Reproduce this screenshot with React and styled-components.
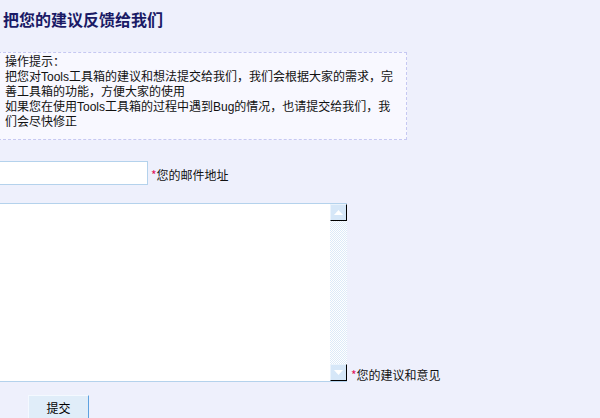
import styled, { createGlobalStyle } from "styled-components";

const GlobalStyle = createGlobalStyle`
  html, body {
    margin: 0;
    padding: 0;
    background: #eef0fc;
    overflow: hidden;
  }
  body {
    font-family: "DejaVu Sans", "Noto Sans CJK SC", sans-serif;
    font-size: 12px;
    color: #000;
  }
`;

const Page = styled.div`
  width: 600px;
  height: 418px;
  overflow: hidden;
`;

const Title = styled.h2`
  margin: 9px 0 0 3px;
  font-family: "Noto Sans CJK SC", sans-serif;
  font-size: 16px;
  line-height: 20px;
  font-weight: bold;
  color: #1a1a66;
`;

const HintBox = styled.div`
  margin: 23px 0 0 -2px;
  width: 393px;
  padding: 2px 8px 9px 6px;
  border: 1px dashed #c6c8f2;
  background: #f8f8ff;
  font-family: "Liberation Sans", "Noto Sans CJK SC", sans-serif;
  font-size: 12px;
  line-height: 15px;
  color: #111;
`;

const Form = styled.div`
  margin: 21px 0 0 -80px;
  display: flex;
  flex-direction: column;
`;

const Row = styled.div`
  display: flex;
  align-items: ${(p) => (p.bottom ? "flex-end" : "center")};
  margin-bottom: ${(p) => p.gap || 0}px;
`;

const TextInput = styled.input`
  box-sizing: border-box;
  width: 228px;
  height: 24px;
  margin: 0;
  border: 1px solid #b4d2ec;
  background: #fff;
  outline: none;
`;

const Label = styled.span`
  margin-left: ${(p) => p.offset || 3}px;
  font-family: "Noto Sans CJK SC", sans-serif;
  font-size: 12px;
  line-height: 15px;
  color: #111;
  padding-top: 2px;
`;

const Star = styled.span`
  color: #e0105a;
`;

const AreaBox = styled.div`
  display: flex;
  width: 427px;
  height: 177px;
  border-top: 1px solid #b4d2ec;
  border-bottom: 1px solid #b4d2ec;
  background: #fff;
`;

const TextArea = styled.textarea`
  flex: 1;
  border: none;
  margin: 0;
  padding: 0;
  resize: none;
  outline: none;
  background: #fff;
`;

const Scrollbar = styled.div`
  width: 17px;
  display: flex;
  flex-direction: column;
  background-color: #dceaf8;
  background-image:
    linear-gradient(45deg, #fff 25%, transparent 25%, transparent 75%, #fff 75%),
    linear-gradient(45deg, #fff 25%, transparent 25%, transparent 75%, #fff 75%);
  background-size: 2px 2px;
  background-position: 0 0, 1px 1px;
`;

const ScrollButton = styled.div`
  box-sizing: border-box;
  width: 17px;
  height: 17px;
  display: flex;
  align-items: center;
  justify-content: center;
  background: #d6e7f8;
  border-top: 1px solid #eaf3fc;
  border-left: 1px solid #eaf3fc;
  border-right: 1px solid #000;
  border-bottom: 1px solid #000;
`;

const Track = styled.div`
  flex: 1;
`;

const Arrow = ({ down }) => (
  <svg width="9" height="5" viewBox="0 0 9 5">
    <path d={down ? "M0 0 H9 L4.5 5 Z" : "M0 5 H9 L4.5 0 Z"} fill="#fff" />
  </svg>
);

const SubmitButton = styled.button`
  box-sizing: border-box;
  margin-left: 108px;
  width: 61px;
  height: 24px;
  padding: 0;
  background: #e0edf9;
  border: 1px solid #f4f9ff;
  border-right-color: #5ea2e0;
  border-bottom-color: #5ea2e0;
  font-family: "Noto Sans CJK SC", sans-serif;
  font-size: 12px;
  color: #000;
`;

export default function App() {
  return (
    <Page>
      <GlobalStyle />
      <Title>把您的建议反馈给我们</Title>
      <HintBox>
        操作提示：
        <br />
        把您对Tools工具箱的建议和想法提交给我们，我们会根据大家的需求，完善工具箱的功能，方便大家的使用
        <br />
        如果您在使用Tools工具箱的过程中遇到Bug的情况，也请提交给我们，我们会尽快修正
      </HintBox>
      <Form>
        <Row gap={18}>
          <TextInput type="text" />
          <Label>
            <Star>*</Star>您的邮件地址
          </Label>
        </Row>
        <Row bottom gap={13}>
          <AreaBox>
            <TextArea />
            <Scrollbar>
              <ScrollButton>
                <Arrow />
              </ScrollButton>
              <Track />
              <ScrollButton>
                <Arrow down />
              </ScrollButton>
            </Scrollbar>
          </AreaBox>
          <Label offset={4}>
            <Star>*</Star>您的建议和意见
          </Label>
        </Row>
        <Row>
          <SubmitButton>提交</SubmitButton>
        </Row>
      </Form>
    </Page>
  );
}
